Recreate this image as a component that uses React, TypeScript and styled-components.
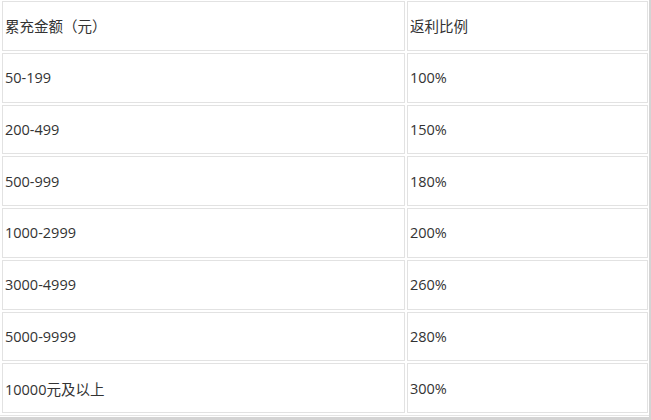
import React from "react";
import styled, { createGlobalStyle } from "styled-components";

const Global = createGlobalStyle`
  html, body { margin: 0; padding: 0; background: #ffffff; }
  body { font-family: "Open Sans", "Noto Sans CJK SC", sans-serif; }
`;

const Frame = styled.div`
  box-sizing: border-box;
  width: 651px;
  height: 420px;
  overflow: hidden;
  background: #ffffff;
  border-right: 2px solid #d4d4d4;
  border-bottom: 3px solid #d4d4d4;
`;

const Table = styled.table`
  border-collapse: separate;
  border-spacing: 2px;
  margin: -1px 0 0 0;
  width: 649px;
  border-right: 1px solid #e4e4e4;
  border-bottom: 1px solid #e4e4e4;
  table-layout: fixed;
`;

const Cell = styled.td<{ $w: number }>`
  box-sizing: border-box;
  width: ${(p) => p.$w}px;
  height: 49.75px;
  padding: 0 2px;
  border: 1px solid #e2e2e2;
  vertical-align: middle;
  font-family: "Open Sans", "Noto Sans CJK SC", sans-serif;
  font-size: 14.5px;
  color: #333333;
  white-space: nowrap;
`;

const rows: [string, string][] = [
  ["累充金额（元）", "返利比例"],
  ["50-199", "100%"],
  ["200-499", "150%"],
  ["500-999", "180%"],
  ["1000-2999", "200%"],
  ["3000-4999", "260%"],
  ["5000-9999", "280%"],
  ["10000元及以上", "300%"],
];

export default function App() {
  return (
    <>
      <Global />
      <Frame>
        <Table>
          <tbody>
            {rows.map(([a, b], i) => (
              <tr key={i}>
                <Cell $w={403}>{a}</Cell>
                <Cell $w={241}>{b}</Cell>
              </tr>
            ))}
          </tbody>
        </Table>
      </Frame>
    </>
  );
}
